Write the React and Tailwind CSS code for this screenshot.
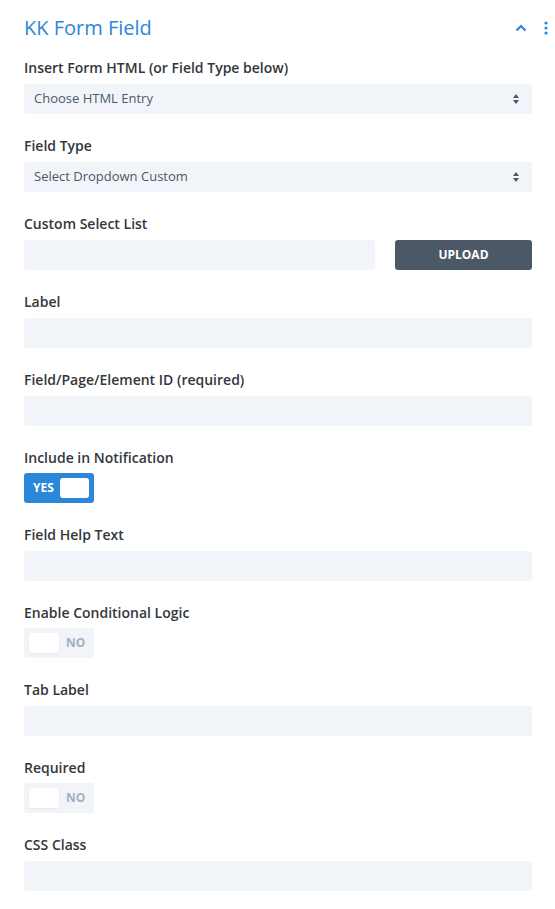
import { useState } from 'react';

function Label({ children, tight }) {
    return (
        <label className={tight ? 'block text-[14px] leading-5 font-semibold text-[#32373c] mb-[5px]' : 'block text-[14px] leading-5 font-semibold text-[#32373c] mb-1.5'}>
            {children}
        </label>
    );
}

function TextInput() {
    return <input type="text" className="block w-full h-[30px] rounded-[3px] bg-[#f1f5f9] px-2.5 text-[13px] text-[#4c5866] outline-none" />;
}

function SelectBox({ value }) {
    return (
        <div className="flex items-center justify-between h-[30px] rounded-[3px] bg-[#f1f5f9] pl-2.5 pr-3">
            <span className="text-[13px] text-[#4c5866]">{value}</span>
            <svg width="8" height="12" viewBox="0 0 8 12" className="text-[#4c5866]">
                <path d="M4 1 L7 5 H1 Z" fill="currentColor" />
                <path d="M4 11 L7 7 H1 Z" fill="currentColor" />
            </svg>
        </div>
    );
}

function Toggle({ on, onClick }) {
    if (on) {
        return (
            <button onClick={onClick} className="flex items-center w-[70px] h-[30px] rounded-[3px] bg-[#2b87da] pl-[9px] pr-[5px] gap-[6px]">
                <span className="text-[12px] font-bold text-white">YES</span>
                <span className="block w-[30px] h-5 rounded-[3px] bg-white"></span>
            </button>
        );
    }
    return (
        <button onClick={onClick} className="flex items-center w-[70px] h-[30px] rounded-[3px] bg-[#f1f5f9] pl-[5px] gap-[7px]">
            <span className="block w-[30px] h-5 rounded-[3px] bg-white shadow-[0_1px_2px_rgba(0,0,0,0.06)]"></span>
            <span className="text-[12px] font-bold text-[#a2b0c1]">NO</span>
        </button>
    );
}

export default function App() {
    const [notify, setNotify] = useState(true);
    const [logic, setLogic] = useState(false);
    const [required, setRequired] = useState(false);

    return (
        <div className="w-[555px] min-h-[909px] bg-white pl-6 pr-[23px] pt-[14px] font-['Open_Sans',sans-serif]">
            <div className="flex items-center justify-between h-[27px]">
                <h2 className="text-[20px] text-[#2b87da]">KK Form Field</h2>
                <div className="flex items-center gap-[17px] -mr-[16px]">
                    <svg width="12" height="8" viewBox="0 0 12 8">
                        <path d="M1.5 6.5 L6 2 L10.5 6.5" stroke="#2b87da" strokeWidth="2.2" fill="none" />
                    </svg>
                    <svg width="4" height="14" viewBox="0 0 4 14">
                        <circle cx="2" cy="2" r="1.6" fill="#2b87da" />
                        <circle cx="2" cy="7" r="1.6" fill="#2b87da" />
                        <circle cx="2" cy="12" r="1.6" fill="#2b87da" />
                    </svg>
                </div>
            </div>

            <div className="flex flex-col gap-[22px] mt-[17px]">
                <div>
                    <Label>Insert Form HTML (or Field Type below)</Label>
                    <SelectBox value="Choose HTML Entry" />
                </div>
                <div>
                    <Label>Field Type</Label>
                    <SelectBox value="Select Dropdown Custom" />
                </div>
                <div>
                    <Label>Custom Select List</Label>
                    <div className="flex gap-5">
                        <div className="w-[351px]"><TextInput /></div>
                        <button className="flex-1 h-[30px] rounded-[3px] bg-[#4c5866] text-white text-[12px] font-bold">UPLOAD</button>
                    </div>
                </div>
                <div>
                    <Label>Label</Label>
                    <TextInput />
                </div>
                <div>
                    <Label>Field/Page/Element ID (required)</Label>
                    <TextInput />
                </div>
                <div>
                    <Label tight>Include in Notification</Label>
                    <Toggle on={notify} onClick={() => setNotify(!notify)} />
                </div>
                <div>
                    <Label>Field Help Text</Label>
                    <TextInput />
                </div>
                <div>
                    <Label tight>Enable Conditional Logic</Label>
                    <Toggle on={logic} onClick={() => setLogic(!logic)} />
                </div>
                <div>
                    <Label>Tab Label</Label>
                    <TextInput />
                </div>
                <div>
                    <Label tight>Required</Label>
                    <Toggle on={required} onClick={() => setRequired(!required)} />
                </div>
                <div>
                    <Label>CSS Class</Label>
                    <TextInput />
                </div>
            </div>
        </div>
    );
}
